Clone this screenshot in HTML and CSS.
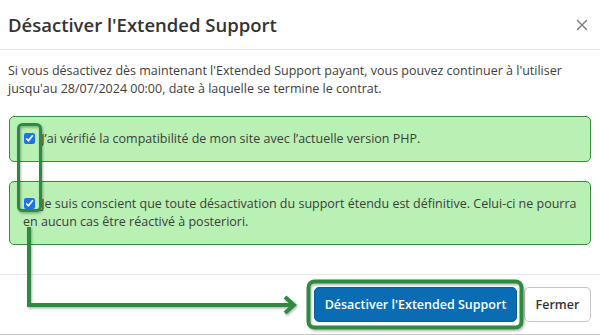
FILE: index.html
```html
<!DOCTYPE html>
<html lang="fr">
<head>
<meta charset="utf-8">
<title>Désactiver l'Extended Support</title>
<link rel="stylesheet" href="styles.css">
</head>
<body>
<div class="modal">
  <div class="header">
    <h1 class="title">Désactiver l'Extended Support</h1>
    <span class="close" aria-label="Fermer">
      <svg width="12" height="12" viewBox="0 0 12 12"><path d="M1 1L11 11M11 1L1 11" stroke="#777" stroke-width="1.3" fill="none"/></svg>
    </span>
  </div>
  <div class="body">
    <p class="intro">Si vous désactivez dès maintenant l'Extended Support payant, vous pouvez continuer à l'utiliser jusqu'au 28/07/2024 00:00, date à laquelle se termine le contrat.</p>
    <label class="check-box"><input type="checkbox" checked> J’ai vérifié la compatibilité de mon site avec l’actuelle version PHP.</label>
    <label class="check-box"><input type="checkbox" checked> Je suis conscient que toute désactivation du support étendu est définitive. Celui-ci ne pourra en aucun cas être réactivé à posteriori.</label>
  </div>
  <div class="footer">
    <button class="btn btn-primary">Désactiver l'Extended Support</button>
    <button class="btn btn-default">Fermer</button>
  </div>
  <svg class="annot" width="600" height="335" viewBox="0 0 600 335">
    <defs>
      <filter id="sh" x="-10%" y="-10%" width="120%" height="120%">
        <feDropShadow dx="1" dy="1.5" stdDeviation="1.2" flood-color="#000" flood-opacity="0.3"/>
      </filter>
    </defs>
    <g filter="url(#sh)" fill="none" stroke="#2f8a3f" stroke-width="3">
      <rect x="18.5" y="124.5" width="22" height="86" rx="4"/>
      <path d="M29 227V305H291" stroke-width="4"/>
      <path d="M285 297L294 305L285 313" stroke-width="4" stroke-linejoin="miter"/>
      <rect x="308.5" y="281.5" width="213" height="46" rx="6" stroke-width="4"/>
    </g>
  </svg>
</div>
</body>
</html>
```
FILE: styles.css
```css
* { box-sizing: border-box; }
html, body { margin: 0; padding: 0; background: #fff; }
body {
  font-family: "Open Sans", "Noto Sans", sans-serif;
  color: #444;
  width: 600px;
  height: 335px;
  overflow: hidden;
}
.modal {
  position: relative;
  width: 600px;
  height: 335px;
  border-bottom: 1px solid #c8c8c8;
}
.header {
  height: 50px;
  display: flex;
  align-items: center;
  justify-content: space-between;
  padding: 0 12px 0 8px;
  border-bottom: 1px solid #e6e6e6;
}
.title {
  margin: 0;
  font-size: 18.5px;
  font-weight: 600;
  color: #333;
}
.close { display: flex; align-items: center; }
.body {
  padding: 12px 9px 0 9px;
  height: 224px;
}
.intro {
  margin: 0 0 18px -1px;
  font-size: 12.5px;
  line-height: 18px;
  color: #3d3d3d;
}
.check-box {
  display: block;
  background: #b9f0b4;
  border: 1px solid #3a8a3e;
  border-radius: 5px;
  padding: 13px 13px;
  font-size: 12.5px;
  line-height: 18px;
  margin-bottom: 19px;
  color: #3d3d3d;
}
.check-box:first-of-type { margin-top: 1px; }
.check-box input {
  width: 11px;
  height: 11px;
  margin: 0 3px 0 1px;
  vertical-align: -1px;
  accent-color: #1a73e8;
}
.footer {
  display: flex;
  justify-content: flex-end;
  gap: 7px;
  padding: 12px 9px 0 0;
  border-top: 1px solid #e6e6e6;
}
.btn {
  height: 35px;
  border-radius: 5px;
  font-family: "Open Sans", "Noto Sans", sans-serif;
  font-size: 12.5px;
  font-weight: 600;
  padding: 0;
  white-space: nowrap;
}
.btn-primary {
  width: 203px;
  background: #0a6cb3;
  color: #fff;
  border: 1px solid #085d9b;
}
.btn-default {
  width: 67px;
  background: #fff;
  color: #333;
  border: 1px solid #c4c4c4;
}
.annot {
  position: absolute;
  left: 0;
  top: 0;
  pointer-events: none;
}
```
